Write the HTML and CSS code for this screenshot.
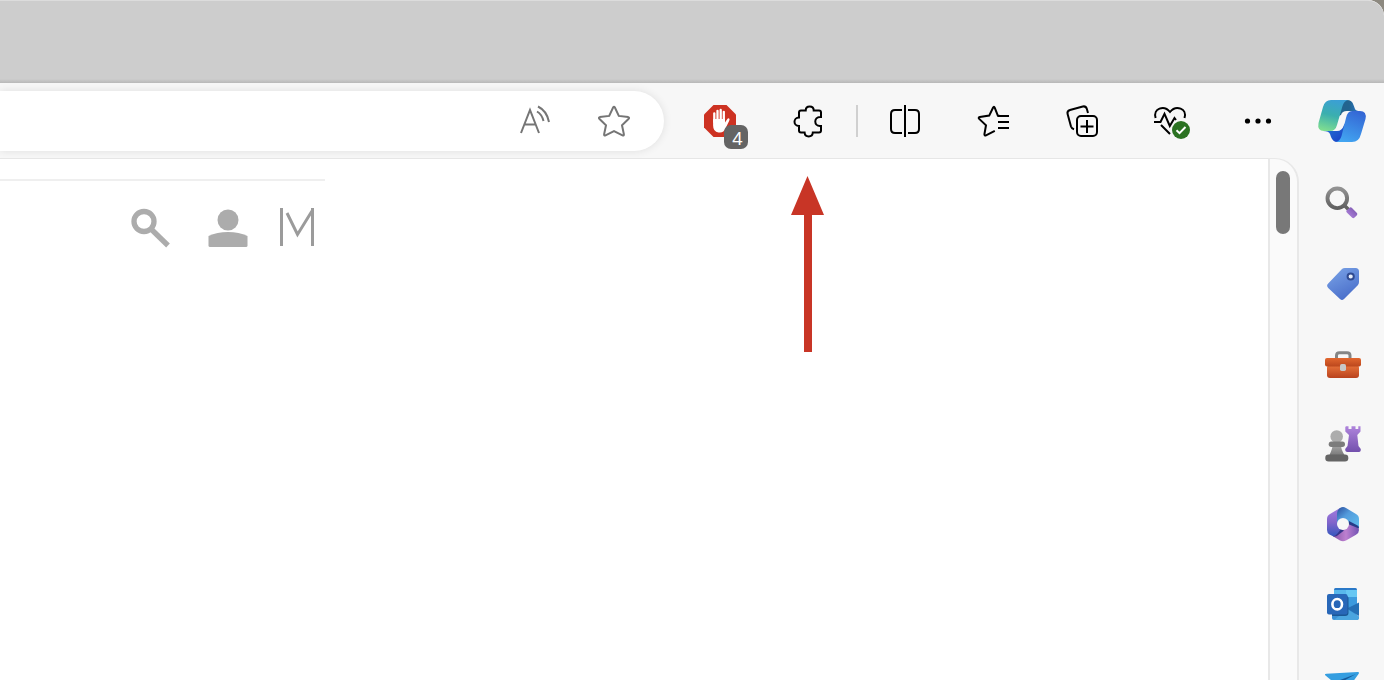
FILE: index.html
```html
<!DOCTYPE html>
<html lang="en">
<head>
<meta charset="UTF-8" />
<meta name="viewport" content="width=device-width, initial-scale=1" />
<title>Browser</title>
<link rel="stylesheet" href="styles.css">
</head>
<body>
<div class="window">
  <div class="tabstrip"></div>

  <header class="toolbar">
    <div class="address-bar">
      <input type="text" class="address-input" aria-label="Address" />
      <button type="button" class="address-btn" aria-label="Read aloud">
        <svg class="icon line" viewBox="0 0 40 40">
          <path d="M6 32 L15 9 L24 32 M9 23.5 H21" />
          <path d="M22 10.5 Q27 13.5 28.5 20 M23 5.5 Q32 10 34 21" />
        </svg>
      </button>
      <button type="button" class="address-btn" aria-label="Add to favorites">
        <svg class="icon line" viewBox="0 0 40 40">
          <path d="M19.2 6.3 Q20 5.2 20.8 6.3 L24.8 14.9 L34.2 16.1 Q35.7 16.5 34.7 17.7 L28 24.3 L29.9 33.3 Q30 35 28.5 34.3 L20 30 L11.5 34.3 Q10 35 10.1 33.3 L12 24.3 L5.3 17.7 Q4.3 16.5 5.8 16.1 L15.2 14.9 Z" />
        </svg>
      </button>
    </div>

    <div class="tools">
      <button type="button" class="tool-btn" aria-label="Ad blocker">
        <svg class="icon" viewBox="0 0 40 40">
          <path fill="#cd3222" d="M12.5 4 H25.5 L35 13.5 V26.5 L25.5 36 H12.5 L3 26.5 V13.5 Z" />
          <path fill="none" stroke="#fff" stroke-width="2.3" stroke-linecap="round" d="M13.3 21 V12.3 M16.5 20 V9.8 M19.7 20 V9 M22.8 20 V10.8" />
          <path fill="#fff" d="M12.1 18 H24 V21.5 L26 18.5 Q27.4 16.5 28.4 17.8 Q28.9 18.5 28 20.2 L24.7 27 Q22.8 31.5 19 31.5 H17.5 Q12.1 30.8 12.1 24.5 Z" />
        </svg>
        <span class="badge">4</span>
      </button>
      <button type="button" class="tool-btn" aria-label="Extensions">
        <svg class="icon line" viewBox="0 0 40 40">
          <path d="M12 9.5 H16.7 C16.7 4.2 24.7 4.2 24.7 9.5 H30 Q32 9.5 32 11.5 V16 H31 C24.7 16 24.7 25 31 25 H32 V29.5 Q32 31.5 30 31.5 H23.8 C23.5 36.7 15.9 36.7 15.6 31.5 H12 Q10 31.5 10 29.5 V25 C4 25 4 16.5 10 16.5 V11.5 Q10 9.5 12 9.5 Z" />
        </svg>
      </button>
      <span class="divider"></span>
      <button type="button" class="tool-btn" aria-label="Split screen">
        <svg class="icon line" viewBox="0 0 40 40">
          <path d="M17 9 H10 Q6 9 6 13 V28 Q6 32 10 32 H17 M23 9 H30 Q34 9 34 13 V28 Q34 32 30 32 H23 M20 4 V36" />
        </svg>
      </button>
      <button type="button" class="tool-btn" aria-label="Favorites">
        <svg class="icon line" viewBox="0 0 40 40">
          <path d="M26.5 14.8 H24.9 L21.8 6.8 Q21 4.8 20 6.8 L16.2 14.6 L6.8 16 Q4.9 16.5 6.2 17.9 L13 24.3 L11.4 33.3 Q11.5 35 13 34.3 L21.8 29.8" />
          <path d="M25 15 H36 M25 21 H36 M25 27 H36" />
        </svg>
      </button>
      <button type="button" class="tool-btn" aria-label="Collections">
        <svg class="icon line" viewBox="0 0 40 40">
          <rect x="16" y="15" width="20" height="20" rx="4" />
          <path d="M26 19 V32 M19.5 25.5 H32.5" />
          <path d="M27 12 L25.8 7.8 Q24.8 4.8 21.8 5.5 L9 9 Q5.8 10 6.6 13 L10 25.5 Q10.6 27.5 13 28.3" />
        </svg>
      </button>
      <button type="button" class="tool-btn" aria-label="Browser essentials">
        <svg class="icon line" viewBox="0 0 40 40">
          <path d="M6.6 17 C3.8 7.5 15 3.5 21 11 C27 3.5 38.5 7.5 35.5 17" />
          <path d="M5 21 H11.5 L15.5 12.8 L20.8 25 L25.5 17 L27 19 M12 24 L21 33" />
          <circle class="ok-dot" cx="32" cy="29" r="9" />
          <path class="ok-tick" d="M27.5 29.3 L30.5 32.2 L36.5 26" />
        </svg>
      </button>
      <button type="button" class="tool-btn" aria-label="Settings and more">
        <svg class="icon" viewBox="0 0 40 40">
          <circle cx="10.5" cy="20" r="2.6" /><circle cx="21" cy="20" r="2.6" /><circle cx="31.5" cy="20" r="2.6" />
        </svg>
      </button>
      <button type="button" class="copilot-btn" aria-label="Copilot">
        <svg class="copilot" viewBox="0 0 48 48">
          <defs>
            <linearGradient id="cpTop" x1="0" y1="0" x2="1" y2="0"><stop offset=".55" stop-color="#22648f" /><stop offset="1" stop-color="#2c79d2" /></linearGradient>
            <linearGradient id="cpBottom" x1="0" y1="0" x2="1" y2="1"><stop offset="0" stop-color="#2788d8" /><stop offset="1" stop-color="#1936c4" /></linearGradient>
            <linearGradient id="cpLeft" x1=".6" y1="0" x2=".35" y2="1"><stop offset="0" stop-color="#3b9fd5" /><stop offset=".5" stop-color="#3bafae" /><stop offset="1" stop-color="#7ddc91" /></linearGradient>
            <linearGradient id="cpRight" x1=".7" y1="0" x2=".3" y2="1"><stop offset="0" stop-color="#3467d5" /><stop offset="1" stop-color="#42a5f1" /></linearGradient>
          </defs>
          <path fill="url(#cpTop)" d="M20 3 H28 Q33 3 34.5 8 L36 12 Q37 14 41 14 H28 Q23 14 22 18 L17 20 Z" />
          <path fill="url(#cpBottom)" d="M4 34 H18 Q23 34 25 28 L30 20 L28 45 H18 Q14 45 12 40 L11 37 Q10 34 4 34 Z" />
          <path fill="url(#cpLeft)" d="M12 3 H29 Q25 4 23.5 9 L18 28 Q16.5 34 11 34 H5 Q-2 34 -.5 26 L4 10 Q6 3 12 3 Z" />
          <path fill="url(#cpRight)" d="M33 14 H41 Q48 14 46.5 22 L42 37 Q40 45 33 45 H17 Q21 44 22.5 39 L27 21 Q28.5 14 33 14 Z" />
        </svg>
      </button>
    </div>
  </header>

  <div class="content">
    <main class="page">
      <nav class="site-nav">
        <button type="button" class="site-btn" aria-label="Search">
          <svg class="icon" viewBox="0 0 40 40" fill="none" stroke="#acacac">
            <circle cx="14" cy="13.5" r="10" stroke-width="5.3" />
            <path stroke-width="5.3" d="M20.5 20.5 L38 37.5" />
          </svg>
        </button>
        <button type="button" class="site-btn" aria-label="Account">
          <svg class="icon" viewBox="0 0 40 40" fill="#acacac">
            <circle cx="20" cy="12" r="10.5" />
            <path d="M.5 28 Q9 24 20 24 T39.5 28 V37.5 Q39.5 39 38 39 H2 Q.5 39 .5 37.5 Z" />
          </svg>
        </button>
        <a href="#" class="site-logo" aria-label="Home">
          <svg class="icon" viewBox="0 0 40 40" fill="none" stroke="#9b9b9b" stroke-width="3">
            <path d="M5.5 0 V38 M36.5 38 V0" />
            <path d="M11 5 L21.5 26.5 L36 3" />
          </svg>
        </a>
      </nav>
      <svg class="arrow" viewBox="0 0 33 176">
        <path fill="#c83526" d="M16.5 0 L33 39 H21 V176 H13 V39 H0 Z" />
      </svg>
    </main>
    <div class="scrollbar"><div class="thumb"></div></div>

    <aside class="sidebar">
      <button type="button" class="side-btn" aria-label="Search">
        <svg class="icon" viewBox="0 0 40 40">
          <defs>
            <linearGradient id="glass" x1="0" y1="0" x2="0" y2="1"><stop offset="0" stop-color="#929292" /><stop offset="1" stop-color="#606060" /></linearGradient>
            <linearGradient id="handle" x1="0" y1="1" x2="1" y2="0"><stop offset="0" stop-color="#b78be4" /><stop offset="1" stop-color="#7550a8" /></linearGradient>
          </defs>
          <path stroke="#646464" stroke-width="3.5" d="M22 22 L27 27" />
          <circle cx="15.3" cy="15.3" r="9.8" fill="none" stroke="url(#glass)" stroke-width="3.9" />
          <path fill="url(#handle)" d="M24.5 27.5 L28 24.5 Q29 24 30 25 L34.9 30 Q35.9 31 34.9 32.2 L32.3 34.8 Q31.3 35.7 30.2 34.8 L25 29.8 Q23.7 28.5 24.5 27.5 Z" />
        </svg>
      </button>
      <button type="button" class="side-btn" aria-label="Shopping">
        <svg class="icon" viewBox="0 0 40 40">
          <defs><linearGradient id="tag" x1="0" y1="0" x2=".5" y2="1"><stop offset="0" stop-color="#7ca5e8" /><stop offset="1" stop-color="#4b70cb" /></linearGradient></defs>
          <path fill="url(#tag)" d="M20 6 Q21 5 23 5 H33.5 Q37 5 37 8.5 V19 Q37 21 35.8 22.2 L22 36 Q20 38 18 36 L6.2 25 Q4 22.7 6.2 20.5 Z" />
          <circle cx="28.7" cy="13.5" r="3.1" fill="#e8effa" stroke="#304b91" stroke-width="2" />
        </svg>
      </button>
      <button type="button" class="side-btn" aria-label="Tools">
        <svg class="icon" viewBox="0 0 40 40">
          <defs>
            <linearGradient id="box" x1="0" y1="0" x2="0" y2="1"><stop offset="0" stop-color="#e8743b" /><stop offset="1" stop-color="#b9421d" /></linearGradient>
            <linearGradient id="lid" x1="0" y1="0" x2="0" y2="1"><stop offset="0" stop-color="#e2672f" /><stop offset="1" stop-color="#bb471d" /></linearGradient>
          </defs>
          <path fill="none" stroke="#858585" stroke-width="3" d="M14.5 16 V12.5 Q14.5 9.7 17.5 9.7 H25 Q28 9.7 28 12.5 V16" />
          <rect x="5" y="22" width="32" height="13" rx="3" fill="url(#box)" />
          <rect x="3" y="15" width="36" height="8.5" rx="2" fill="url(#lid)" />
          <rect x="18" y="21" width="6" height="7" rx="1.7" fill="#c7c7c7" />
        </svg>
      </button>
      <button type="button" class="side-btn" aria-label="Games">
        <svg class="icon" viewBox="0 0 40 40">
          <defs>
            <linearGradient id="pawn" x1="0" y1="0" x2="0" y2="1"><stop offset="0" stop-color="#b2b2b2" /><stop offset="1" stop-color="#777" /></linearGradient>
            <linearGradient id="rook" x1="0" y1="0" x2="0" y2="1"><stop offset="0" stop-color="#af84dc" /><stop offset="1" stop-color="#7350ad" /></linearGradient>
          </defs>
          <path fill="url(#rook)" d="M24 3.3 H26.5 V6 H29.5 V3.3 H33.5 V6 H36.3 V3.3 H38.5 V8.5 L35.3 12 L36.5 23 L38.8 26 Q39 29 37 29 H25.5 Q23 29 23.2 26 L25.5 23 L27 12 L23.3 8.5 V4 Z" />
          <path fill="url(#pawn)" d="M11 19 H19 Q18 25 23 33 H7 Q11 25 11 19 Z" />
          <circle cx="14.7" cy="13.5" r="6.3" fill="#acacac" />
          <rect x="6.7" y="18.5" width="16.3" height="5.5" rx="2.7" fill="#7c7c7c" />
          <rect x="3.3" y="31.5" width="23" height="7" rx="3.3" fill="#656565" />
        </svg>
      </button>
      <button type="button" class="side-btn" aria-label="Microsoft 365">
        <svg class="icon" viewBox="0 0 40 40">
          <defs>
            <linearGradient id="hexLeft" x1=".5" y1="0" x2=".5" y2="1"><stop offset="0" stop-color="#a27cdf" /><stop offset=".5" stop-color="#8265cb" /><stop offset="1" stop-color="#3457be" /></linearGradient>
            <linearGradient id="hexTop" x1="0" y1="0" x2="1" y2="1"><stop offset="0" stop-color="#294d9d" /><stop offset=".4" stop-color="#539bdc" /><stop offset="1" stop-color="#61c0ef" /></linearGradient>
            <linearGradient id="hexBottom" x1="0" y1="0" x2="1" y2="0"><stop offset="0" stop-color="#8854a8" /><stop offset=".5" stop-color="#bd80d0" /><stop offset="1" stop-color="#7253b3" /></linearGradient>
          </defs>
          <path fill="url(#hexLeft)" d="M18 5 L8 11 Q5 12.7 5 16 V27 Q5 30 7.5 31.5 L11 33.3 Q13 34 15 32.5 L21 28 V12 Z" />
          <path fill="url(#hexTop)" d="M18 5 Q21 3.2 24 5 L34 11 Q37 12.7 37 16 V25 L27 21 H15 V11 Q15 7 18 5 Z" />
          <path fill="url(#hexBottom)" d="M26 20 L34.5 23 Q37 24.5 37 27 Q37 30 34 31.7 L24 37.5 Q21 39 18 37.5 L11 33.3 Q14 33 16 31 L20 26 Z" />
          <path fill="#263c88" d="M27 18 L36 22.8 Q37 23.5 37 25.5 L26 21 Z" />
          <path fill="#35368a" d="M11 33.3 Q13.5 34 15.5 32.5 L22 27.5 L19 26 L15.5 30.5 Q13.5 33 11 33.3 Z" />
          <circle cx="21" cy="21" r="6" fill="#f7f7f7" />
        </svg>
      </button>
      <button type="button" class="side-btn" aria-label="Outlook">
        <svg class="icon" viewBox="0 0 40 40">
          <path fill="#2a79c8" d="M12 6.5 Q12 5 13.5 5 H33.5 Q35 5 35 6.5 V23 H12 Z" />
          <path fill="#58b8ec" d="M12 7 H24 V14 H12 Z" />
          <path fill="#66c7f3" d="M24 7 H35 V14 H24 Z" />
          <path fill="#3d9bde" d="M24 14 H35 V22 L26 27 Z" />
          <path fill="#3b91d6" d="M10 21 H25 L37 34 Q37 37 35 37 H12 Q10 37 10 35 Z" />
          <path fill="#2670b5" d="M25 25.5 L37 19.5 V33 Z" />
          <path fill="#4ba5df" d="M25 26 L37 33.5 Q37 37 35 37 H12 L21 30 Z" />
          <path fill="#1b5896" d="M24 13 Q26.5 13 26.5 15 V30 Q26.5 33 23 33 H10 V31 H23 Z" />
          <rect x="5" y="11" width="20.5" height="20.5" rx="2" fill="#2867b8" />
          <ellipse cx="15.2" cy="21.2" rx="4.8" ry="5.2" fill="none" stroke="#fff" stroke-width="2.6" />
        </svg>
      </button>
      <button type="button" class="side-btn" aria-label="Drop">
        <svg class="icon" viewBox="0 0 40 40">
          <path fill="#359ee0" d="M3.5 12.5 Q2 11 4.5 10.8 L35.5 9 Q38 9 36.5 11 L20 34 L15 22 Z" />
          <path fill="#185a9b" d="M14 18.5 L34 11 L16 21 Z" />
        </svg>
      </button>
    </aside>
  </div>
</div>
</body>
</html>
```
FILE: styles.css
```css
* {
  box-sizing: border-box;
}
body {
  margin: 0;
  background: #8d8980;
  font-family: "Noto Sans", "Open Sans", sans-serif;
}
button {
  padding: 0;
  border: none;
  background: none;
  cursor: pointer;
  font-family: inherit;
}
svg {
  display: block;
  overflow: visible;
}
.window {
  display: flex;
  flex-direction: column;
  height: 100vh;
  overflow: hidden;
  background: #f7f7f7;
  border-top-right-radius: 16px;
}
.tabstrip {
  flex: none;
  height: 83px;
  background: linear-gradient(#cdcdcd 95%, #b8b8b8);
  border-top: 1px solid #dcdcdc;
  border-top-right-radius: 16px;
}

/* toolbar */
.toolbar {
  flex: none;
  display: flex;
  align-items: center;
  padding: 8px 0 7px;
}
.address-bar {
  flex: 1;
  display: flex;
  height: 60px;
  padding-right: 11px;
  background: #fff;
  border-radius: 0 30px 30px 0;
  box-shadow: 0 0 8px rgba(0, 0, 0, 0.1);
}
.address-input {
  flex: 1;
  min-width: 0;
  border: none;
  outline: none;
  background: transparent;
  font-size: 24px;
}
.address-btn,
.tool-btn,
.copilot-btn,
.side-btn,
.site-btn,
.site-logo {
  display: flex;
  align-items: center;
  justify-content: center;
}
.address-btn {
  width: 79px;
  color: #757575;
}
.icon {
  width: 40px;
  height: 40px;
}
.line {
  fill: none;
  stroke: currentColor;
  stroke-width: 2;
}
.tools {
  display: flex;
  align-items: center;
  padding-left: 13px;
}
.tool-btn {
  position: relative;
  width: 88px;
  height: 60px;
  color: #000;
}
.badge {
  position: absolute;
  right: 17px;
  bottom: 2px;
  width: 24px;
  height: 24px;
  padding-left: 3px;
  border-radius: 7px;
  background: #646464;
  color: #fff;
  font-size: 18px;
  line-height: 26px;
  text-align: center;
}
.divider {
  width: 2px;
  height: 32px;
  margin: 0 3px;
  background: #d0d0d0;
}
.ok-dot {
  fill: #2b7222;
  stroke: none;
}
.ok-tick {
  stroke: #fff;
}
.copilot-btn {
  width: 83px;
  height: 60px;
}
.copilot {
  width: 48px;
  height: 48px;
}

/* page area */
.content {
  flex: 1;
  display: flex;
  min-height: 0;
}
.page {
  position: relative;
  flex: 1;
  padding-top: 20px;
  background: #fff;
  border-top: 1px solid #e6e6e6;
}
.site-nav {
  display: flex;
  justify-content: flex-end;
  width: 325px;
  padding-top: 27px;
  border-top: 2px solid #efefef;
}
.site-btn {
  width: 78px;
}
.site-logo {
  width: 58px;
}
.arrow {
  position: absolute;
  top: 17px;
  right: 444px;
  width: 33px;
  height: 176px;
}
.scrollbar {
  width: 31px;
  padding: 12px 0 0 6px;
  background: #fafafa;
  border: solid #e8e8e8;
  border-width: 1px 2px 0 2px;
  border-top-right-radius: 24px;
}
.thumb {
  width: 14px;
  height: 63px;
  border-radius: 7px;
  background: #787878;
}

/* sidebar */
.sidebar {
  flex: none;
  width: 85px;
  padding-top: 5px;
  overflow: hidden;
}
.side-btn {
  width: 100%;
  height: 80px;
}
```
